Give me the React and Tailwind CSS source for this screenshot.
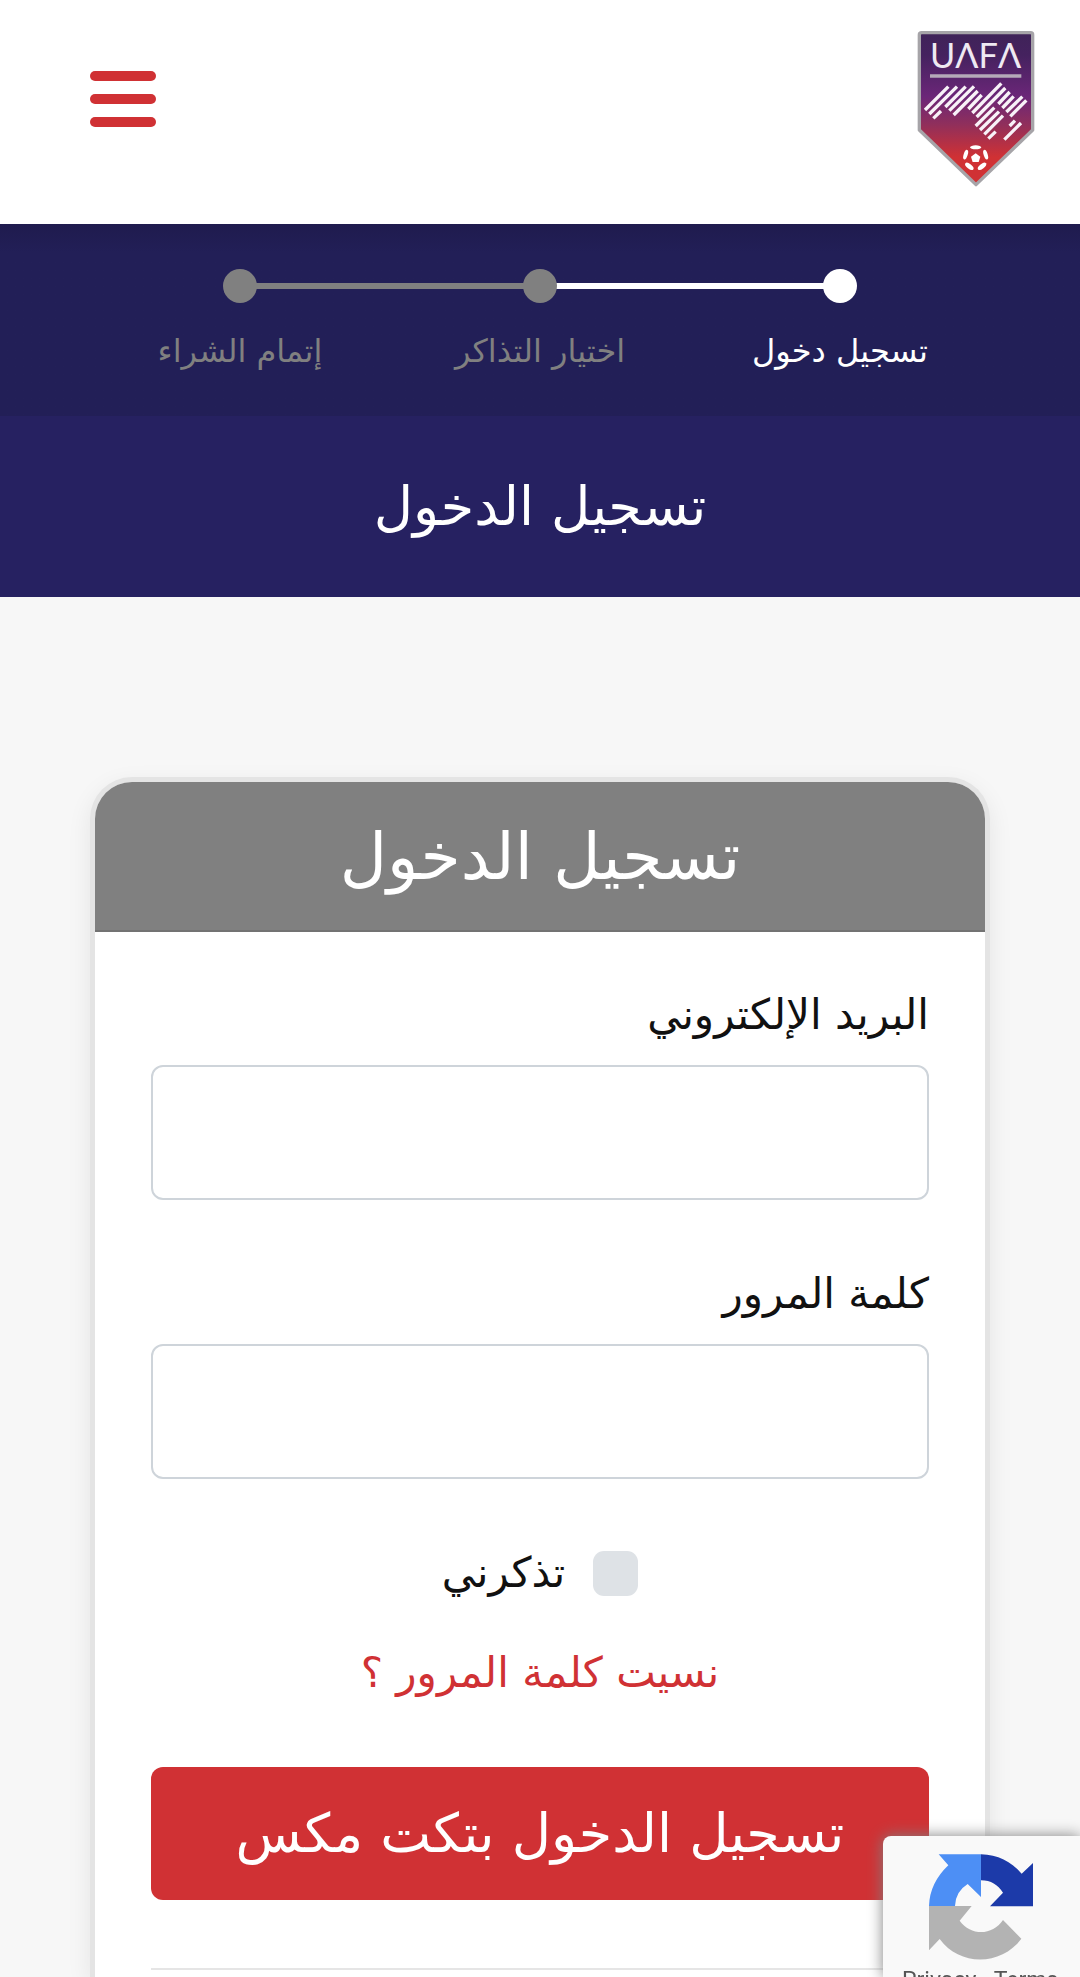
import { useState } from 'react';

const steps = [
  { label: 'تسجيل دخول', active: true },
  { label: 'اختيار التذاكر', active: false },
  { label: 'إتمام الشراء', active: false },
];

function Logo() {
  return (
    <svg viewBox="52 60 354 471" className="h-[157px] w-[118px]" role="img" aria-label="UAFA">
      <defs>
        <linearGradient id="shield" x1="0" y1="0" x2="0" y2="1">
          <stop offset="0" stopColor="#3f2358" />
          <stop offset="0.15" stopColor="#45225f" />
          <stop offset="0.42" stopColor="#6b2678" />
          <stop offset="0.6" stopColor="#8f2f5c" />
          <stop offset="0.82" stopColor="#d03134" />
          <stop offset="1" stopColor="#d03134" />
        </linearGradient>
      </defs>
      <path
        d="M66 68H393Q399 68 399 74V360L229 524L59 360V74Q59 68 66 68Z"
        fill="url(#shield)"
        stroke="#a6a4a8"
        strokeWidth="10"
        strokeLinejoin="round"
      />
      <text x="228" y="173" textAnchor="middle" fill="#efe9f2" className="font-['Lato'] text-[103px]">
        UΛFΛ
      </text>
      <path d="M91 198H365" stroke="#b5a9b8" strokeWidth="10" />
      <path
        d="M76 300L146 230M89 312L172 230M101 325L124 303M137 291L198 230M149 302L223 229M162 315L234 243M206 297L246 255M218 309L305 220M231 321L317 234M296 282L330 246M308 294L342 259M320 306L368 260M332 319L380 271M228 348L284 293M241 360L298 305M254 373L310 317M266 386L288 365M314 389L364 339M330 348L346 332"
        stroke="#f8f2f8"
        strokeWidth="10"
      />
      <g fill="#fff">
        <path d="M228 430L242 440L237 456H219L214 440Z" />
        <ellipse cx="228" cy="412" rx="17" ry="6" />
        <ellipse cx="198" cy="434" rx="6" ry="15" transform="rotate(18 198 434)" />
        <ellipse cx="258" cy="434" rx="6" ry="15" transform="rotate(-18 258 434)" />
        <ellipse cx="209" cy="469" rx="15" ry="7" transform="rotate(38 209 469)" />
        <ellipse cx="247" cy="469" rx="15" ry="7" transform="rotate(-38 247 469)" />
      </g>
    </svg>
  );
}

function Header() {
  return (
    <header className="flex h-56 items-start justify-between bg-white pr-[45px] pl-[90px]">
      <a href="#" className="mt-[30px]">
        <Logo />
      </a>
      <button type="button" aria-label="القائمة" className="mt-[71px] flex w-[66px] flex-col gap-[13px]">
        <span className="h-[10px] w-full rounded-full bg-[#d03134]" />
        <span className="h-[10px] w-full rounded-full bg-[#d03134]" />
        <span className="h-[10px] w-full rounded-full bg-[#d03134]" />
      </button>
    </header>
  );
}

function Steps() {
  return (
    <nav className="h-48 bg-[#221f57] bg-linear-to-b from-[#1f1b4e] to-[#221f57] to-15% px-[90px] pt-[45px]">
      <ol className="grid grid-cols-3">
        {steps.map((step, i) => (
          <li key={step.label} className="relative flex flex-col items-center">
            {i < steps.length - 1 && (
              <span
                className={`absolute top-[14px] right-1/2 h-[6px] w-full ${step.active ? 'bg-white' : 'bg-[#808080]'}`}
              />
            )}
            <span
              className={`relative size-[34px] rounded-full ${step.active ? 'bg-white' : 'bg-[#808080]'}`}
            />
            <span
              className={`mt-6 text-[32px] leading-12 ${step.active ? 'text-white' : 'text-[#808080]'}`}
            >
              {step.label}
            </span>
          </li>
        ))}
      </ol>
    </nav>
  );
}

function Field({ id, label, type, value, onChange }) {
  return (
    <div className="mb-[58px]">
      <label htmlFor={id} className="mb-[14px] block text-[42px] leading-[72px]">
        {label}
      </label>
      <input
        id={id}
        type={type}
        value={value}
        onChange={(e) => onChange(e.target.value)}
        className="block h-[135px] w-full rounded-xl border-2 border-[#ced4da] bg-white px-9 text-[42px]"
      />
    </div>
  );
}

function RecaptchaBadge() {
  return (
    <aside
      dir="ltr"
      className="fixed right-0 bottom-0 h-[141px] w-[197px] overflow-hidden rounded-tl-lg bg-[#f9f9f9] pt-[18px] shadow-[0_0_15px_gray]"
    >
      <svg viewBox="209 343 312 318" className="ml-[46px] h-[106px] w-[104px]" aria-hidden="true">
        <path d="M238 344H365V472L325 433Q288 456 287 499H209Q211 430 267 377Z" fill="#4d8ff5" />
        <path d="M365 344C415 345 455 365 487 402L521 370V500H392L431 459C415 435 395 422 365 422Z" fill="#1c3aa9" />
        <path d="M209 499H337L301 543C335 590 400 588 431 541L486 597C425 680 300 680 241 598L209 632Z" fill="#b3b3b3" />
      </svg>
      <div className="mt-[7px] pl-[19px] font-['Roboto'] text-[23px] leading-7 whitespace-nowrap text-[#555]">
        <a href="#privacy">Privacy</a> - <a href="#terms">Terms</a>
      </div>
    </aside>
  );
}

export default function App() {
  const [email, setEmail] = useState('');
  const [password, setPassword] = useState('');
  const [remember, setRemember] = useState(false);

  return (
    <div
      dir="rtl"
      className="flex min-h-screen flex-col bg-[#f7f7f7] font-['DejaVu_Sans',sans-serif] text-[#111]"
    >
      <Header />
      <Steps />
      <div className="flex h-[181px] items-center justify-center bg-[#262161]">
        <h1 className="text-[54px] leading-[80px] text-white">تسجيل الدخول</h1>
      </div>

      <main className="flex flex-1 flex-col px-[90px] pt-[180px]">
        <section className="flex-1 rounded-t-[42px] border-[5px] border-b-0 border-[#e4e4e4] bg-white shadow-[0_8px_24px_rgba(0,0,0,0.08)]">
          <h2 className="h-[150px] rounded-t-[37px] border-b-2 border-[#737373] bg-[#808080] text-center text-[65px] leading-[150px] text-white">
            تسجيل الدخول
          </h2>
          <form className="px-14 pt-[47px]" onSubmit={(e) => e.preventDefault()}>
            <Field id="email" label="البريد الإلكتروني" type="email" value={email} onChange={setEmail} />
            <Field id="password" label="كلمة المرور" type="password" value={password} onChange={setPassword} />

            <div className="flex items-center justify-center gap-7">
              <input
                id="remember"
                type="checkbox"
                checked={remember}
                onChange={(e) => setRemember(e.target.checked)}
                className="size-[45px] appearance-none rounded-[11px] bg-[#dee2e6] checked:bg-[#d03134]"
              />
              <label htmlFor="remember" className="text-[42px] leading-[72px]">
                تذكرني
              </label>
            </div>

            <div className="mt-7 text-center">
              <a href="#forgot" className="text-[42px] leading-[72px] text-[#d03134]">
                نسيت كلمة المرور ؟
              </a>
            </div>

            <button
              type="submit"
              className="mt-[58px] block h-[133px] w-full rounded-xl bg-[#d03134] text-[54px] leading-[80px] text-white"
            >
              تسجيل الدخول بتكت مكس
            </button>

            <hr className="mt-[68px] border-t-2 border-[#e5e5e5]" />
          </form>
        </section>
      </main>

      <RecaptchaBadge />
    </div>
  );
}
